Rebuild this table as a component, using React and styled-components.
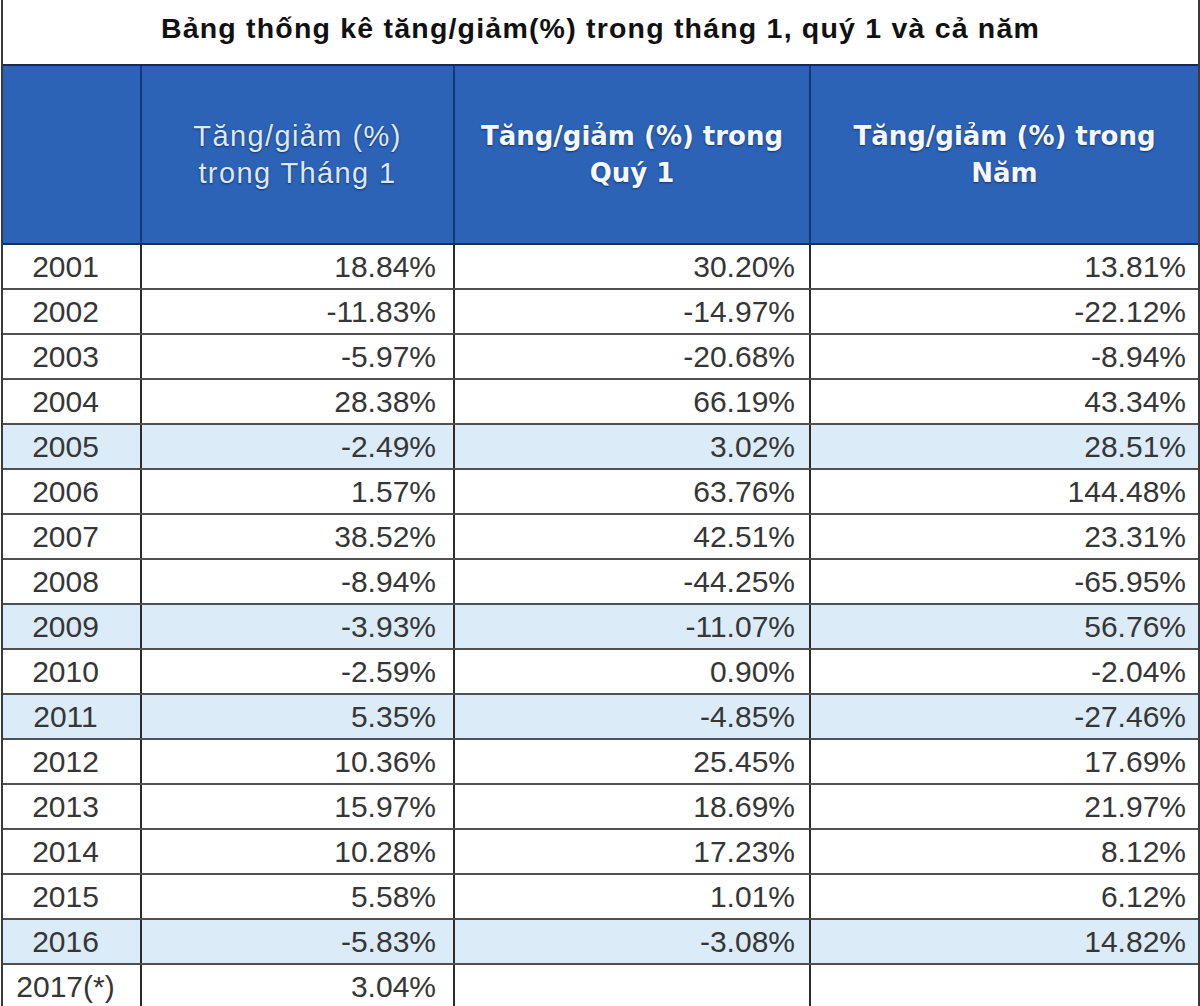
import React from "react";
import styled, { createGlobalStyle } from "styled-components";

const rows = [
	["2001", "18.84%", "30.20%", "13.81%"],
	["2002", "-11.83%", "-14.97%", "-22.12%"],
	["2003", "-5.97%", "-20.68%", "-8.94%"],
	["2004", "28.38%", "66.19%", "43.34%"],
	["2005", "-2.49%", "3.02%", "28.51%", true],
	["2006", "1.57%", "63.76%", "144.48%"],
	["2007", "38.52%", "42.51%", "23.31%"],
	["2008", "-8.94%", "-44.25%", "-65.95%"],
	["2009", "-3.93%", "-11.07%", "56.76%", true],
	["2010", "-2.59%", "0.90%", "-2.04%"],
	["2011", "5.35%", "-4.85%", "-27.46%", true],
	["2012", "10.36%", "25.45%", "17.69%"],
	["2013", "15.97%", "18.69%", "21.97%"],
	["2014", "10.28%", "17.23%", "8.12%"],
	["2015", "5.58%", "1.01%", "6.12%"],
	["2016", "-5.83%", "-3.08%", "14.82%", true],
	["2017(*)", "3.04%", "", ""],
];

const App = () => {
	return (
		<>
			<GlobalStyle />
			<Frame>
				<Title>Bảng thống kê tăng/giảm(%) trong tháng 1, quý 1 và cả năm</Title>
				<Table>
					<colgroup>
						<col style={{ width: 138 }} />
						<col style={{ width: 313 }} />
						<col style={{ width: 356 }} />
						<col />
					</colgroup>
					<thead>
						<tr>
							<HeadCell />
							<HeadCell $light>
								Tăng/giảm (%)
								<br />
								trong Tháng 1
							</HeadCell>
							<HeadCell>
								Tăng/giảm (%) trong
								<br />
								Quý 1
							</HeadCell>
							<HeadCell>
								Tăng/giảm (%) trong
								<br />
								Năm
							</HeadCell>
						</tr>
					</thead>
					<tbody>
						{rows.map(([year, m, q, y, hl]) => (
							<Row key={year} $highlight={hl}>
								<YearCell>{year}</YearCell>
								<ValueCell $pad={17}>{m}</ValueCell>
								<ValueCell>{q}</ValueCell>
								<ValueCell $pad={12}>{y}</ValueCell>
							</Row>
						))}
					</tbody>
				</Table>
			</Frame>
		</>
	);
};

export default App;

const GlobalStyle = createGlobalStyle`
	html, body {
		margin: 0;
		padding: 0;
		background: #ffffff;
		overflow: hidden;
	}
	body {
		font-family: "Liberation Sans", Arial, sans-serif;
	}
`;

const Frame = styled.div`
	width: 1195px;
	height: 1006px;
	margin-left: 1px;
	border-left: 2px solid #3a3a3a;
	border-right: 2px solid #3a3a3a;
	background: #ffffff;
	overflow: hidden;
`;

const Title = styled.div`
	display: flex;
	align-items: center;
	justify-content: center;
	height: 66px;
	padding-bottom: 7px;
	box-sizing: border-box;
	font-weight: 700;
	font-size: 28.5px;
	letter-spacing: 1.2px;
	color: #111111;
	border-bottom: 2px solid #1c2a44;
`;

const Table = styled.table`
	width: 100%;
	table-layout: fixed;
	border-collapse: collapse;
	font-family: "Liberation Sans", Arial, sans-serif;
`;

const HeadCell = styled.th`
	height: 177px;
	padding: 0 6px;
	background: #2c63b7;
	border-left: 2px solid #163a78;
	border-bottom: 2px solid #2a2f3a;
	vertical-align: middle;
	text-align: center;
	line-height: 37px;
	font-family: ${({ $light }) =>
		$light ? '"Liberation Sans", Arial, sans-serif' : '"DejaVu Sans", Verdana, sans-serif'};
	font-size: ${({ $light }) => ($light ? "29px" : "26px")};
	letter-spacing: ${({ $light }) => ($light ? "1.4px" : "0")};
	font-weight: ${({ $light }) => ($light ? 400 : 700)};
	color: ${({ $light }) => ($light ? "#dce9fa" : "#f4f8ff")};
	text-shadow: 0 1px 2px rgba(20, 25, 70, 0.7);

	&:first-child {
		border-left: none;
	}
`;

const Row = styled.tr`
	height: 45px;
	background: ${({ $highlight }) => ($highlight ? "#dbebf7" : "#ffffff")};

	td {
		border-bottom: 2px solid #505050;
	}
`;

const YearCell = styled.td`
	padding: 0 12px 0 0;
	text-align: center;
	font-size: 30px;
	color: #363636;
	white-space: nowrap;
	line-height: 43px;
`;

const ValueCell = styled.td`
	padding: 0 ${({ $pad }) => $pad ?? 14}px 0 0;
	text-align: right;
	font-size: 30px;
	color: #363636;
	border-left: 2px solid #2a2a2a;
	line-height: 43px;
	white-space: nowrap;
`;
